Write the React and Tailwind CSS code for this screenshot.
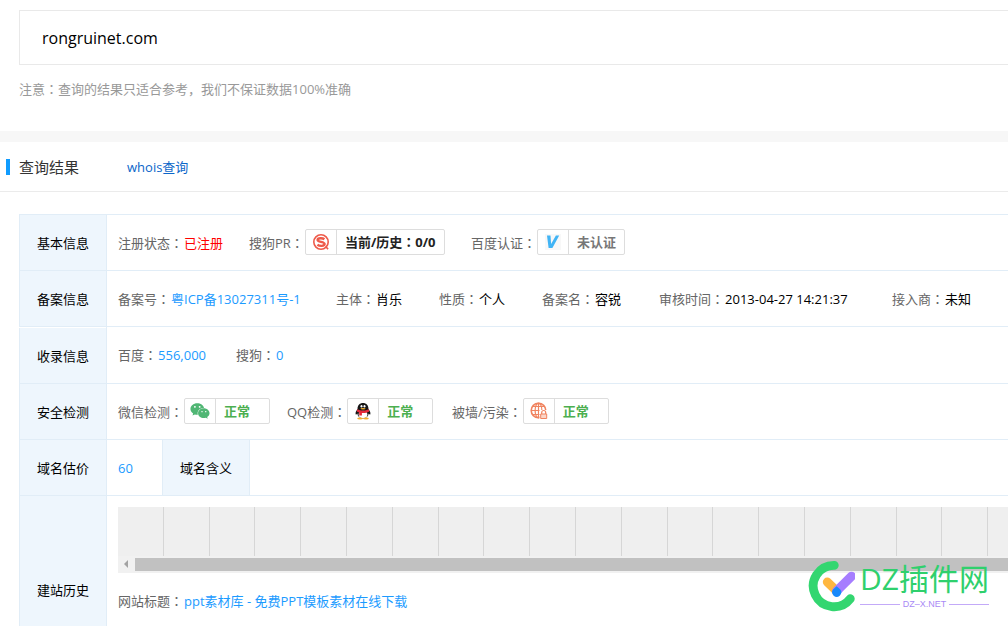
import { FaWeixin } from 'react-icons/fa'

const linkClass = 'text-[#1c9bff] hover:underline'

function Colon() {
    return <span className="font-['Noto_Sans_CJK_TC',sans-serif]">：</span>
}

function Label({ children }) {
    return (
        <span className="mr-px text-[#666]">
            {children}
            <Colon />
        </span>
    )
}

function Field({ label, children }) {
    return (
        <div className="flex items-center whitespace-nowrap">
            <Label>{label}</Label>
            {children}
        </div>
    )
}

function Badge({ icon, className, children }) {
    return (
        <span className="mb-[2px] flex h-[26px] rounded-xs border border-[#ddd] bg-white font-bold">
            <span className="flex w-[31px] items-center justify-center border-r border-[#ddd]">{icon}</span>
            <span className={`px-2 leading-6 ${className}`}>{children}</span>
        </span>
    )
}

function SogouIcon() {
    return (
        <svg width="18" height="18" viewBox="0 0 18 18" aria-hidden="true">
            <circle cx="9" cy="9" r="7.2" fill="none" stroke="#ee5a4a" strokeWidth="1.6" />
            <path d="M13.5 13.5l2.600 2.600" stroke="#ee5a4a" strokeWidth="1.6" />
            <path
                d="M12.4 6.2C10.6 4.9 5.6 4.8 5.6 7c0 2.3 7 1.6 7 4.1 0 2.2-5 2.2-7.2.6"
                fill="none"
                stroke="#ee5a4a"
                strokeWidth="2.4"
            />
        </svg>
    )
}

function VerifyIcon() {
    return (
        <svg width="16" height="16" viewBox="0 0 16 16" aria-hidden="true">
            <rect width="16" height="16" fill="#f8f8f8" />
            <path d="M2 1.5h3.500l.6 8.500 4.800-8.500h3.300L7.400 14H3.600z" fill="#41b4f5" />
        </svg>
    )
}

function QQIcon() {
    return (
        <svg width="16" height="18" viewBox="0 0 16 18" aria-hidden="true">
            <path d="M2.500 7C2.500 3 5 1 8 1s5.500 2 5.500 6c1.400 2 2.300 3.600 1.800 5.400-.5.500-1.200-.2-1.600-.8-.4 3-2.200 4.900-5.700 4.900s-5.300-1.900-5.700-4.900c-.4.600-1.100 1.300-1.600.8C.2 10.600 1.100 9 2.500 7z" fill="#151515" />
            <ellipse cx="8" cy="12.500" rx="4.400" ry="3.800" fill="#fff" />
            <ellipse cx="5" cy="16.500" rx="2.800" ry="1" fill="#f5ad2b" />
            <ellipse cx="11" cy="16.500" rx="2.800" ry="1" fill="#f5ad2b" />
            <path d="M2.300 7.300c3.600 1.800 7.800 1.800 11.400 0l.5 2.200c-2.400 1.300-5 1.700-7.300 1.500v2.500H4.200v-3.100L1.800 9.500z" fill="#e5293a" />
            <ellipse cx="6.500" cy="4.300" rx="1" ry="1.300" fill="#fff" />
            <ellipse cx="9.500" cy="4.300" rx="1" ry="1.300" fill="#fff" />
            <ellipse cx="8" cy="6.800" rx="2.600" ry=".7" fill="#f5ad2b" />
        </svg>
    )
}

function GlobeLockIcon() {
    return (
        <svg width="18" height="18" viewBox="0 0 18 18" fill="none" stroke="#f0835f" aria-hidden="true">
            <circle cx="8.500" cy="8.500" r="7.300" strokeWidth="1.600" />
            <ellipse cx="8.500" cy="8.500" rx="3.400" ry="7.300" strokeWidth="1.200" />
            <path d="M8.500 1v15M1 8.500h15M2.500 4.500h12M2.500 12.500h12" strokeWidth="1.200" />
            <path d="M9.500 8h8.500V18H9.500z" fill="#fff" stroke="none" />
            <path d="M11.700 12v-1.500a2 2 0 0 1 4 0V12" strokeWidth="1.200" />
            <path d="M10.700 12h6v4.500h-6z" fill="#fbd5c8" />
        </svg>
    )
}

function HeadCell({ className = '', children }) {
    return (
        <th scope="row" className={`h-14 border border-[#e1edf7] bg-[#eef6fd] p-0 text-center font-normal ${className}`}>
            {children}
        </th>
    )
}

function Watermark() {
    return (
        <div className="absolute right-[19px] bottom-[13px] flex gap-[5px]">
            <svg width="48" height="54" viewBox="806 559 48 54" fill="none" strokeLinecap="round" aria-hidden="true">
                <path d="M833.300 565.300A20.700 20.700 0 1 0 849.300 598.700" stroke="#33d670" strokeWidth="8.800" />
                <path d="M826.300 582l9.400 9" stroke="#ffb740" strokeWidth="9" />
                <path d="M850.500 576.200L835.700 591" stroke="#a67dff" strokeWidth="9" />
                <path d="M835.700 586.200l3.600 3.400a4.500 4.500 0 1 1-7.200 0z" fill="#1989fa" />
            </svg>
            <div>
                <div className="text-[30px] leading-10 whitespace-nowrap text-[#2fd06d]">DZ插件网</div>
                <div className="flex items-center gap-[3px] font-['Liberation_Sans',sans-serif] text-[9px] leading-[10px] text-[#a98af5]">
                    <span className="h-px flex-1 bg-[#c3aaf8]" />
                    DZ–X.NET
                    <span className="h-px flex-1 bg-[#c3aaf8]" />
                </div>
            </div>
        </div>
    )
}

export default function App() {
    return (
        <div className="relative h-screen overflow-hidden bg-white font-['Open_Sans','Noto_Sans_CJK_SC',sans-serif] text-[13px] leading-5 text-black">
            <section className="pt-[10px] pl-[19px]">
                <input
                    type="text"
                    aria-label="域名"
                    defaultValue="rongruinet.com"
                    className="block h-[55px] w-full border-y border-l border-[#e9e9e9] pl-[22px] text-base outline-none"
                />
                <p className="mt-[14px] text-[#999]">注意<Colon />查询的结果只适合参考，我们不保证数据100%准确</p>
            </section>

            <div className="mt-8 h-[11px] bg-[#f7f7f7]" />

            <header className="flex h-[50px] items-center border-b border-[#ebebeb] pl-[6px]">
                <span className="h-4 w-1 bg-[#109cff]" />
                <h2 className="ml-[9px] text-[15px] text-[#333]">查询结果</h2>
                <a href="#whois" className="ml-12 text-[#0b66c9]">whois查询</a>
            </header>

            <main className="mt-[22px] pl-[19px]">
                <table className="w-full table-fixed border-collapse">
                    <colgroup>
                        <col className="w-[87px]" />
                        <col />
                    </colgroup>
                    <tbody>
                        <tr>
                            <HeadCell>基本信息</HeadCell>
                            <td className="border-y border-[#e1edf7] pl-[11px]">
                                <div className="grid grid-cols-[131px_222px_auto] items-center">
                                    <Field label="注册状态"><span className="text-[#f00]">已注册</span></Field>
                                    <Field label="搜狗PR">
                                        <Badge icon={<SogouIcon />} className="text-[#222]">
                                            当前/历史<Colon />0/0
                                        </Badge>
                                    </Field>
                                    <Field label="百度认证">
                                        <Badge icon={<VerifyIcon />} className="text-[#777]">未认证</Badge>
                                    </Field>
                                </div>
                            </td>
                        </tr>
                        <tr>
                            <HeadCell>备案信息</HeadCell>
                            <td className="border-y border-[#e1edf7] pl-[11px]">
                                <div className="grid grid-cols-[218px_103px_103px_117px_233px_auto]">
                                    <Field label="备案号"><a href="#icp" className={linkClass}>粤ICP备13027311号-1</a></Field>
                                    <Field label="主体">肖乐</Field>
                                    <Field label="性质">个人</Field>
                                    <Field label="备案名">容锐</Field>
                                    <Field label="审核时间">2013-04-27 14:21:37</Field>
                                    <Field label="接入商">未知</Field>
                                </div>
                            </td>
                        </tr>
                    </tbody>
                </table>

                <table className="w-full table-fixed border-collapse">
                    <colgroup>
                        <col className="w-[87px]" />
                        <col className="w-[56px]" />
                        <col className="w-[87px]" />
                        <col />
                    </colgroup>
                    <tbody>
                        <tr>
                            <HeadCell className="border-t-white">收录信息</HeadCell>
                            <td colSpan={3} className="border-b border-[#e1edf7] pl-[11px]">
                                <div className="grid grid-cols-[118px_auto]">
                                    <Field label="百度"><a href="#baidu" className={linkClass}>556,000</a></Field>
                                    <Field label="搜狗"><a href="#sogou" className={linkClass}>0</a></Field>
                                </div>
                            </td>
                        </tr>
                        <tr>
                            <HeadCell>安全检测</HeadCell>
                            <td colSpan={3} className="border-y border-[#e1edf7] pl-[11px]">
                                <div className="grid grid-cols-[169px_165px_auto]">
                                    <Field label="微信检测">
                                        <Badge icon={<FaWeixin size={20} color="#50b674" />} className="w-[53px] text-[#4caf50]">正常</Badge>
                                    </Field>
                                    <Field label="QQ检测">
                                        <Badge icon={<QQIcon />} className="w-[53px] text-[#4caf50]">正常</Badge>
                                    </Field>
                                    <Field label="被墙/污染">
                                        <Badge icon={<GlobeLockIcon />} className="w-[53px] text-[#4caf50]">正常</Badge>
                                    </Field>
                                </div>
                            </td>
                        </tr>
                        <tr>
                            <HeadCell>域名估价</HeadCell>
                            <td className="border-y border-[#e1edf7] pl-[11px]"><a href="#price" className={linkClass}>60</a></td>
                            <HeadCell>域名含义</HeadCell>
                            <td className="border-y border-[#e1edf7]" />
                        </tr>
                        <tr>
                            <HeadCell>建站历史</HeadCell>
                            <td colSpan={3} className="border-y border-[#e1edf7] pt-[11px] pb-[72px] pl-[11px]">
                                <div className="overflow-hidden bg-[#efefef]">
                                    <ul className="grid w-[916px] grid-cols-20">
                                        {Array.from({ length: 20 }, (_, i) => (
                                            <li key={i} className="h-[49px] border-r border-[#d6d6d6]" />
                                        ))}
                                    </ul>
                                    <div className="flex h-[17px] items-center bg-[#f1f1f1]">
                                        <svg width="17" height="9" viewBox="0 0 17 9" aria-hidden="true">
                                            <path d="M10 0v8L6 4z" fill="#a3a3a3" />
                                        </svg>
                                        <span className="h-[13px] flex-1 bg-[#c1c1c1]" />
                                    </div>
                                </div>
                                <div className="mt-[18px]">
                                    <Field label="网站标题"><a href="#site" className={linkClass}>ppt素材库 - 免费PPT模板素材在线下载</a></Field>
                                </div>
                            </td>
                        </tr>
                    </tbody>
                </table>
            </main>

            <Watermark />
        </div>
    )
}
